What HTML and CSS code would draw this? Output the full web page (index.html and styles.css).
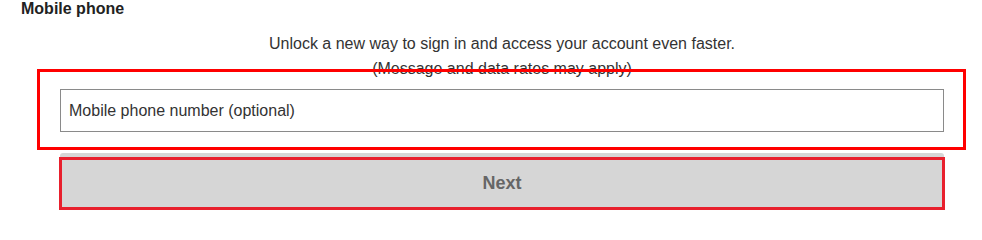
FILE: index.html
```html
<!DOCTYPE html>
<html lang="en">
<head>
<meta charset="utf-8">
<title>Mobile phone</title>
<link rel="stylesheet" href="styles.css">
</head>
<body>
<main class="page">
  <h2 class="heading">Mobile phone</h2>
  <div class="form">
    <p class="intro">Unlock a new way to sign in and access your account even faster.<br>(Message and data rates may apply)</p>
    <div class="field">
      <input class="phone-input" type="tel" placeholder="Mobile phone number (optional)">
    </div>
    <button class="next-btn" type="button">Next</button>
  </div>
  <div class="highlight highlight-field"></div>
  <div class="highlight highlight-button"></div>
</main>
</body>
</html>
```
FILE: styles.css
```css
* {
  box-sizing: border-box;
}

html, body {
  margin: 0;
  padding: 0;
  background: #ffffff;
}

body {
  font-family: "Liberation Sans", Arial, Helvetica, sans-serif;
  color: #333333;
  width: 982px;
  height: 226px;
  overflow: hidden;
}

.page {
  position: relative;
  width: 982px;
  height: 226px;
}

.heading {
  margin: 0;
  padding-left: 21px;
  font-size: 16px;
  line-height: 17px;
  font-weight: bold;
  color: #222222;
}

.form {
  margin-left: 60px;
  width: 884px;
  display: flex;
  flex-direction: column;
}

.intro {
  margin: 14px 0 0 0;
  font-size: 16px;
  line-height: 25px;
  text-align: center;
  color: #333333;
}

.field {
  margin-top: 8px;
}

.phone-input {
  display: block;
  width: 884px;
  height: 43px;
  margin: 0;
  padding: 0 8px;
  border: 1px solid #8a8a8a;
  border-radius: 0;
  background: #ffffff;
  font-family: "Liberation Sans", Arial, Helvetica, sans-serif;
  font-size: 16px;
  color: #333333;
  outline: none;
}

.phone-input::placeholder {
  color: #333333;
  opacity: 1;
}

.next-btn {
  margin-top: 21px;
  width: 884px;
  height: 57px;
  padding: 3px 0 0 0;
  border: none;
  border-radius: 3px;
  background: #d6d6d6;
  font-family: "Liberation Sans", Arial, Helvetica, sans-serif;
  font-size: 18px;
  font-weight: bold;
  color: #666666;
  text-align: center;
}

.highlight {
  position: absolute;
  pointer-events: none;
}

.highlight-field {
  left: 37px;
  top: 69px;
  width: 929px;
  height: 81px;
  border: 3px solid #ff0000;
}

.highlight-button {
  left: 59px;
  top: 157px;
  width: 886px;
  height: 53px;
  border: 3px solid #e8202d;
}
```
